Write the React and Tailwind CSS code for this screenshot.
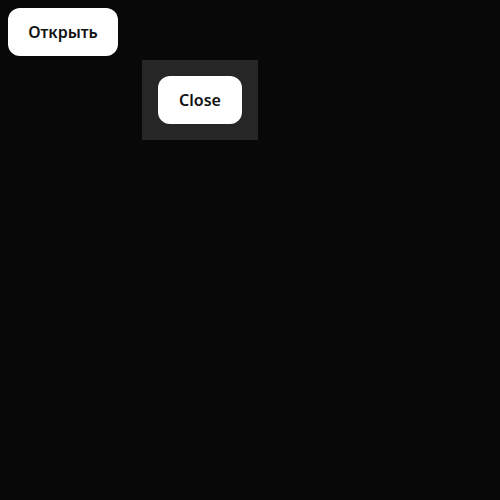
import React, { useState } from "react";

function App() {
  const [open, setOpen] = useState(true);

  return (
    <div
      className="relative min-h-screen w-full bg-[#080808] p-2"
      style={{ fontFamily: '"Noto Sans", "Open Sans", sans-serif' }}
    >
      <button
        onClick={() => setOpen(true)}
        className="h-12 w-[110px] rounded-xl bg-white text-base font-semibold text-[#111]"
      >
        Открыть
      </button>

      {open && (
        <div className="absolute left-[142px] top-[60px] bg-[#262626] p-4">
          <button
            onClick={() => setOpen(false)}
            className="h-12 w-[84px] rounded-xl bg-white text-base font-semibold text-[#111]"
          >
            Close
          </button>
        </div>
      )}
    </div>
  );
}

export default App;
